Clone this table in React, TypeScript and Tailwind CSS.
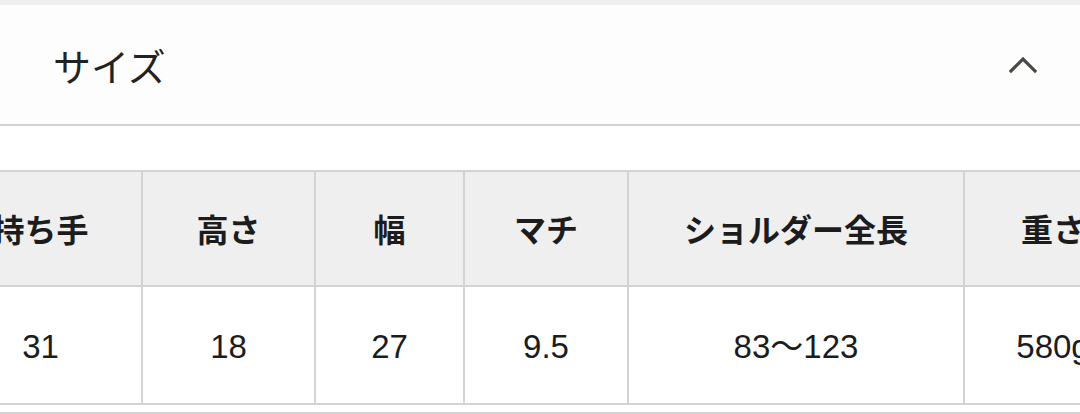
import React from "react";

const cols = [
  { h: "持ち手", v: "31", w: "w-[203px]" },
  { h: "高さ", v: "18", w: "w-[173px]" },
  { h: "幅", v: "27", w: "w-[149px]" },
  { h: "マチ", v: "9.5", w: "w-[164px]" },
  { h: "ショルダー全長", v: "83～123", w: "w-[336px]" },
  { h: "重さ", v: "580g", w: "w-[178px]" },
];

export default function App() {
  return (
    <div className="w-[1080px] h-[414px] overflow-hidden bg-white">
      <div className="h-[5px] bg-[#efefef]" />
      <div className="h-[121px] flex items-center justify-between pl-[53px] pr-[43px] bg-[#fdfdfd] border-b-2 border-[#d3d3d3]">
        <span
          className="text-[38px] text-[#222] leading-none"
          style={{ fontFamily: '"Noto Sans CJK JP", sans-serif' }}
        >
          サイズ
        </span>
        <svg width="28" height="18" viewBox="0 0 28 18" fill="none">
          <path d="M2 15 L14 3 L26 15" stroke="#4a4a42" strokeWidth="3.2" strokeLinecap="square" />
        </svg>
      </div>
      <div className="mt-[44px] overflow-hidden">
        <div className="flex ml-[-60px] w-max border-t-2 border-b-2 border-[#d3d3d3]">
          {cols.map((c, i) => (
            <div key={i} className={`${c.w} shrink-0 flex flex-col border-r-2 border-[#d3d3d3]`}>
              <div
                className="h-[115px] bg-[#efefef] border-b-2 border-[#d3d3d3] flex items-center justify-center text-[32px] font-bold text-[#1c1c1c] pb-[2px]"
                style={{ fontFamily: '"Noto Sans CJK JP", sans-serif' }}
              >
                {c.h}
              </div>
              <div
                className="h-[116px] flex items-center justify-center text-[33px] text-[#1c1c1c] pt-[4px]"
                style={{ fontFamily: '"Liberation Sans", "Noto Sans CJK JP", sans-serif' }}
              >
                {c.v}
              </div>
            </div>
          ))}
        </div>
        <div className="mt-[7px] h-[2px] bg-[#d3d3d3]" />
      </div>
    </div>
  );
}
